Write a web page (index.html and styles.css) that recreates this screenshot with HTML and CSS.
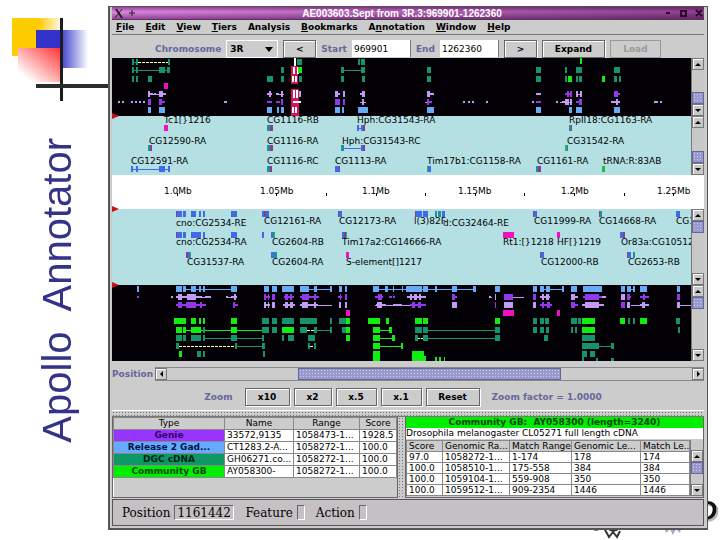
FILE: index.html
```
<!DOCTYPE html>
<html lang="en">

<head>
  <meta charset="UTF-8">
  <meta name="viewport" content="width=device-width, initial-scale=1.0">
  <title>Apollo Annotator</title>
  <link rel="stylesheet" href="styles.css">
</head>

<body>
  <div class="slide">
    <div class="side">
      <svg class="deco" width="108" height="104" aria-hidden="true">
        <defs>
          <linearGradient id="yellow"><stop offset="0.55" stop-color="#ffcc00"/><stop offset="1" stop-color="#fff6dc"/></linearGradient>
          <linearGradient id="blue"><stop offset="0.45" stop-color="#3333cc"/><stop offset="1" stop-color="#fff"/></linearGradient>
          <linearGradient id="red" x1="1" y1="0" x2="0" y2="1"><stop offset="0" stop-color="#ff3333"/><stop offset="0.85" stop-color="#fff"/></linearGradient>
        </defs>
        <rect x="12" y="18" width="48" height="38" fill="url(#yellow)"/>
        <rect x="36" y="30" width="52" height="38" fill="url(#blue)"/>
        <rect x="18" y="48" width="43" height="34" fill="url(#red)"/>
        <rect x="60" y="18" width="3" height="83" fill="#1c1c1c"/>
        <rect x="36" y="84" width="72" height="4" fill="#2c2c2c"/>
      </svg>
      <h1>Apollo  Annotator</h1>
    </div>

    <!-- logo behind the window -->
    <svg class="logo" width="140" height="50" aria-hidden="true">
      <path d="M76 36l3-1 1 4 4-2 2 6 4-4 3 6 3-6 4 4 1-5 4 1-1-4 3-1V24H75v8z" fill="#a6a6c8"/>
      <path d="M11 37q4 5 10 1M24 38l5 9 4-5 4 5 3-6M27 37q6 7 12 1M45 38h6" fill="none" stroke="#333" stroke-width="2"/>
      <text x="117" y="30">D</text>
    </svg>

    <div class="window">
      <div class="titlebar">
        <svg width="30" height="12" aria-hidden="true">
          <path d="M4 2l6 9M10 2L3 11" stroke="#222" stroke-width="1"/>
          <path d="M4 2l6 9" stroke="#222" stroke-width="2"/>
          <path d="M17 6h6M20 3v6" stroke="#222" stroke-width="1"/>
        </svg>
        <span class="caption">AE003603.Sept from 3R.3:969901-1262360</span>
        <svg width="42" height="12" aria-hidden="true">
          <path d="M4 6h4" stroke="#2b062b" stroke-width="2"/>
          <path d="M19 4h5v5h-5zM34 3l6 6M40 3l-6 6" fill="none" stroke="#2b062b" stroke-width="2"/>
        </svg>
      </div>

      <div class="menubar">
        <button><u>F</u>ile</button>
        <button><u>E</u>dit</button>
        <button><u>V</u>iew</button>
        <button><u>T</u>iers</button>
        <button>Analysis</button>
        <button><u>B</u>ookmarks</button>
        <button>A<u>n</u>notation</button>
        <button><u>W</u>indow</button>
        <button><u>H</u>elp</button>
      </div>

      <div class="toolbar">
        <label for="chrom">Chromosome</label>
        <div class="combo">
          <select id="chrom"><option>3R</option></select>
        </div>
        <button class="btn arrow_btn">&lt;</button>
        <label for="start">Start</label>
        <input id="start" class="range" type="text" value="969901">
        <label for="end">End</label>
        <input id="end" class="range" type="text" value="1262360">
        <button class="btn arrow_btn">&gt;</button>
        <button class="btn expand">Expand</button>
        <button class="btn load" disabled>Load</button>
      </div>

      <!-- forward strand evidence -->
      <div class="panel evidence">
        <svg class="track" height="58">
          <path class="line dark" d="M20 4H25M20 12H56M232 12H250"/>
          <path class="dash" d="M26 4H56"/>
          <path class="box dark" d="M20 4H22M24 4H26M56 4H58M246 4H248M249 4H253"/>
          <path class="box dark" d="M20 12H22M24 12H26M47 12H53M55 12H58M169 12H172M229 12H232M249 12H253M315 12H319M424 12H429M453 12H455M464 12H470M502 12H508"/>
          <path class="box dark" d="M20 21H22M24 21H26M36 21H40M155 21H161M169 21H172M187 21H190M229 21H232M250 21H253M315 21H319M424 21H429M453 21H455M464 21H466M467 21H470M502 21H505M507 21H509"/>
          <path class="box bright" d="M468 3H470M456 21H460M490 21H493"/>
          <path class="box pink" d="M52 28H56"/>
          <path class="line lilac" d="M38 36H52M164 36H172M424 36H429M464 36H470M224 44H228M313 44H319M424 44H429M248 44H254M448 44H459M499 44H508M542 44H546M548 44H550"/>
          <path class="box lilac" d="M36 36H38M47 36H51M157 36H159M169 36H171M223 36H226M231 36H233M250 36H253M315 36H318M464 36H466M468 36H470M453 44H457M458 44H460M504 44H506M250 44H252"/>
          <path class="dot lilac" d="M38 36H41M42 36H44M51 36H54M155 36H160M164 36H167M226 36H228M248 36H253M318 36H322M424 36H429M6 44H8M10 44H12M19 44H21M23 44H25M27 44H29M31 44H33M112 44H115M351 44H353M356 44H358M360 44H362M374 44H376M420 44H422M444 44H446M450 44H457M499 44H508M542 44H546M548 44H550"/>
          <path class="box purple" d="M36 44H39M47 44H50M169 44H171M223 44H228M231 44H233M315 44H317M455 36H457M458 36H460M502 36H506M467 44H470"/>
          <path class="dot purple" d="M50 44H53M155 44H160M164 44H168M316 44H320M424 44H429M453 36H460M506 36H508M464 44H470"/>
          <path class="box blue" d="M36 52H39M47 52H53M155 52H160M165 52H167M169 52H172M223 52H228M230 52H232M246 52H249M249 52H256M315 52H322M424 52H429M457 52H460M464 52H470M502 52H508"/>
          <!-- selected gene -->
          <rect x="179" y="8" width="7" height="18" fill="#d4145a"/>
          <rect x="179" y="31" width="8" height="27" fill="#d4145a"/>
          <path d="M183 0V8M182 9V16M186 9V16M181 18V24M184 18V24M182 32V40M185 32V40M181 49V55M184 49V55M181 44H189" stroke="#fff" stroke-width="2"/>
          <path class="box dark" d="M185 4H190"/>
          <path class="box bright" d="M186 12H190"/>
          <path class="box lilac" d="M187 36H189"/>
        </svg>
        <div class="vscroll at_end">
          <button class="up" aria-label="Up"></button>
          <div class="rail"><div class="thumb"></div></div>
          <button class="down" aria-label="Down"></button>
        </div>
      </div>

      <!-- forward strand annotations -->
      <div class="panel genes">
        <svg class="track" height="59">
          <g>
            <text x="52" y="7">Tc1[}1216</text>
            <text x="155" y="7">CG1116-RB</text>
            <text x="245" y="7">Hph:CG31543-RA</text>
            <text x="457" y="7">RpII18:CG1163-RA</text>
            <text x="37" y="28">CG12590-RA</text>
            <text x="155" y="28">CG1116-RA</text>
            <text x="230" y="28">Hph:CG31543-RC</text>
            <text x="455" y="28">CG31542-RA</text>
            <text x="19" y="48">CG12591-RA</text>
            <text x="155" y="48">CG1116-RC</text>
            <text x="223" y="48">CG1113-RA</text>
            <text x="315" y="48">Tim17b1:CG1158-RA</text>
            <text x="425" y="48">CG1161-RA</text>
            <text x="491" y="48">tRNA:R:83AB</text>
          </g>
          <path class="line gene" d="M246 12H250M230 32H250M20 53H57"/>
          <path class="box gene" d="M245 12H247M249 12H251M249 32H251M455 32H456M19 53H21M24 53H26M47 53H53M56 53H58M223 53H227M316 53H319"/>
          <path class="box teal" d="M155 12H158M457 12H459M36 32H38M155 32H158M229 32H232M155 53H158M424 53H426"/>
          <path class="box plum" d="M158 12H161M251 12H253M459 12H460M38 32H40M158 32H161M251 32H253M158 53H160M227 53H228M426 53H429"/>
          <path class="box leaf" d="M453 32H455M315 53H316M490 53H493"/>
          <path class="box pink" d="M52 12H56"/>
        </svg>
        <div class="vscroll at_end">
          <button class="up" aria-label="Up"></button>
          <div class="rail"><div class="thumb"></div></div>
          <button class="down" aria-label="Down"></button>
        </div>
      </div>

      <!-- ruler -->
      <div class="panel ruler">
        <svg class="track" height="34">
          <g>
            <text x="52" y="19">1.0Mb</text>
            <text x="148" y="19">1.05Mb</text>
            <text x="250" y="19">1.1Mb</text>
            <text x="346" y="19">1.15Mb</text>
            <text x="449" y="19">1.2Mb</text>
            <text x="545" y="19">1.25Mb</text>
          </g>
          <path d="M65 18V21M164 18V21M214 18V21M264 18V21M313 18V21M363 18V21M412 18V21M462 18V21M512 18V21M561 18V21" stroke="#000"/>
        </svg>
      </div>

      <!-- reverse strand annotations -->
      <div class="panel genes marked">
        <svg class="track" height="76">
          <g>
            <text x="64" y="17">cno:CG2534-RE</text>
            <text x="152" y="15">CG12161-RA</text>
            <text x="227" y="15">CG12173-RA</text>
            <text x="302" y="15">l(3)82F</text>
            <text x="331" y="17">d:CG32464-RE</text>
            <text x="422" y="15">CG11999-RA</text>
            <text x="487" y="15">CG14668-RA</text>
            <text x="564" y="15">CG10512-RB</text>
            <text x="64" y="36">cno:CG2534-RA</text>
            <text x="160" y="36">CG2604-RB</text>
            <text x="230" y="36">Tim17a2:CG14666-RA</text>
            <text x="391" y="36">Rt1:[}1218</text>
            <text x="445" y="36">HF[}1219</text>
            <text x="509" y="36">Or83a:CG10512-RA</text>
            <text x="75" y="56">CG31537-RA</text>
            <text x="160" y="56">CG2604-RA</text>
            <text x="234" y="56">S-element[]1217</text>
            <text x="429" y="56">CG12000-RB</text>
            <text x="516" y="56">CG2653-RB</text>
          </g>
          <path class="box gene" d="M65 5H70M71 5H74M79 5H84M87 5H89M91 5H93M119 5H125M150 5H152M154 5H157M227 5H230M304 5H310M311 5H316M330 5H333M422 5H425M564 5H568"/>
          <path class="box gene" d="M65 26H70M71 26H74M79 26H89M91 26H93M119 26H125M150 26H152M159 26H161M230 26H232M508 26H511M76 46H78M159 46H162M429 46H432M516 46H519"/>
          <path class="box teal" d="M323 5H325M326 5H329M488 5H490M161 26H163M162 46H165M521 46H523"/>
          <path class="box plum" d="M64 5H65M152 5H154M226 5H227M303 5H304M421 5H422M487 5H488M64 26H65M232 26H234M511 26H513M74 46H76M428 46H429M515 46H516"/>
          <path class="box leaf" d="M234 26H235M162 26H163M78 46H79"/>
          <path class="box pink" d="M391 26H402M445 26H448M234 46H237"/>
        </svg>
        <div class="vscroll">
          <button class="up" aria-label="Up"></button>
          <div class="rail"><div class="thumb"></div></div>
          <button class="down" aria-label="Down"></button>
        </div>
      </div>

      <!-- reverse strand evidence -->
      <div class="panel evidence marked">
        <svg class="track" height="76">
          <path class="line blue" d="M74 4H119M197 4H218M267 4H361M430 4H450M515 4H522"/>
          <path class="box blue" d="M25 4H27M64 4H70M71 4H74M79 4H84M87 4H89M91 4H93M119 4H125M152 4H157M160 4H165M170 4H182M188 4H197M202 4H205M218 4H220M227 4H230M233 4H235M261 4H267M273 4H276M281 4H282M290 4H291M294 4H310M311 4H316M323 4H325M340 4H345M361 4H364M383 4H388M421 4H425M428 4H432M434 4H438M450 4H452M459 4H465M471 4H490M509 4H513M515 4H519M521 4H523M528 4H535M565 4H568"/>
          <path class="line lilac" d="M64 12H99M114 12H125M295 12H314M205 20H220M263 20H312M519 20H536M568 20H580M378 12H380M398 12H412"/>
          <path class="box lilac" d="M66 12H70M75 12H84M122 12H124M298 12H300M302 12H305M307 12H309M383 12H384M430 12H432M434 12H437M459 12H463M509 12H513M152 20H154M156 20H157M160 20H163M173 20H176M178 20H181M190 20H196M202 20H204M227 20H229M233 20H235M265 20H270M340 20H345M392 20H401M421 20H424M473 20H487M515 20H518M530 20H533M565 20H568"/>
          <path class="dot lilac" d="M59 12H61M64 12H90M93 12H99M114 12H116M119 12H125M295 12H314M377 12H379M428 12H438M459 12H466M486 12H494M152 20H158M171 20H183M188 20H206M264 20H274M281 20H290M470 20H492M528 20H537"/>
          <path class="box purple" d="M152 12H154M156 12H157M160 12H163M173 12H176M178 12H180M190 12H197M202 12H204M228 12H229M233 12H235M266 12H270M340 12H343M392 12H401M421 12H424M473 12H487M515 12H518M531 12H533M565 12H568M66 20H70M74 20H84M88 20H90M121 20H123M300 20H303M306 20H309M383 20H384M430 20H432M435 20H438M459 20H463M509 20H513"/>
          <path class="dot purple" d="M25 12H27M152 12H158M172 12H182M188 12H207M226 12H230M263 12H271M277 12H280M281 12H283M340 12H345M471 12H490M515 12H519M528 12H537M64 20H94M121 20H126M298 20H314M428 20H440M459 20H466"/>
          <path class="box pink" d="M234 28H238M391 28H402M445 28H448"/>
          <path class="line bright" d="M74 45H152M268 45H278M268 53H281M268 61H290"/>
          <path class="line dark" d="M205 45H218M316 45H383M93 53H151M316 53H383M125 61H151M487 61H500"/>
          <path class="dash" d="M195 45H203M67 61H124M176 53H180M305 53H311M198 61H203"/>
          <path class="box bright" d="M62 36H74M79 36H84M87 36H89M91 36H93M119 36H125M234 36H238M256 36H268M274 36H277M303 36H310M311 36H316M383 36H388M470 36H483M508 36H513M528 36H535"/>
          <path class="box dark" d="M150 36H157M160 36H165M170 36H182M188 36H205M218 36H220M227 36H234M421 36H425M428 36H432M433 36H437M459 36H465M466 36H469M516 36H518M521 36H523M564 36H568"/>
          <path class="box bright" d="M64 45H70M71 45H74M79 45H89M119 45H125M170 45H182M234 45H238M261 45H268M277 45H280M470 45H483"/>
          <path class="box dark" d="M91 45H93M150 45H157M160 45H165M188 45H195M202 45H205M218 45H220M230 45H234M303 45H310M311 45H316M383 45H388M421 45H425M428 45H432M434 45H437M459 45H461M463 45H465M566 45H568"/>
          <path class="box dark" d="M64 53H70M71 53H74M79 53H89M91 53H93M119 53H125M150 53H152M170 53H172M176 53H182M196 53H203M303 53H306M311 53H316M383 53H388M432 53H436M470 53H483"/>
          <path class="box bright" d="M234 53H238M261 53H268M280 53H283M261 61H268M289 61H291M67 69H70M261 69H268M261 74H268M300 69H312M300 74H314M323 75H325M327 75H329M332 75H333"/>
          <path class="box dark" d="M64 61H67M123 61H125M150 61H153M196 61H198M202 61H204M470 61H487M499 61H502M85 69H89M91 69H93M151 69H153M470 69H475M478 69H483M470 75H472M484 76H486M499 76H502"/>
        </svg>
        <div class="vscroll">
          <button class="up" aria-label="Up"></button>
          <div class="rail"><div class="thumb"></div></div>
          <button class="down" aria-label="Down"></button>
        </div>
      </div>

      <div class="position">
        <span>Position</span>
        <div class="hscroll">
          <button class="left" aria-label="Left"></button>
          <div class="rail"><div class="thumb"></div></div>
          <button class="right" aria-label="Right"></button>
        </div>
      </div>

      <div class="zoombar">
        <span class="zoom_label">Zoom</span>
        <button class="btn x10">x10</button>
        <button class="btn x2">x2</button>
        <button class="btn x5">x.5</button>
        <button class="btn x5">x.1</button>
        <button class="btn reset">Reset</button>
        <span class="factor">Zoom factor = 1.0000</span>
      </div>

      <div class="divider"></div>

      <div class="details">
        <div class="left_pane">
          <table class="types">
            <colgroup><col class="c_type"><col class="c_name"><col class="c_range"><col></colgroup>
            <thead>
              <tr><th>Type</th><th>Name</th><th>Range</th><th>Score</th></tr>
            </thead>
            <tbody>
              <tr><td class="genie">Genie</td><td>33572,9135</td><td>1058473-1...</td><td>1928.5</td></tr>
              <tr><td class="gad">Release 2 Gad...</td><td>CT1283.2-A...</td><td>1058272-1...</td><td>100.0</td></tr>
              <tr><td class="dgc">DGC cDNA</td><td>GH06271.co...</td><td>1058272-1...</td><td>100.0</td></tr>
              <tr><td class="gb">Community GB</td><td>AY058300-</td><td>1058272-1...</td><td>100.0</td></tr>
            </tbody>
          </table>
        </div>
        <div class="vdivider"></div>
        <div class="right_pane">
          <div class="hit_title">Community GB:&nbsp; AY058300 (length=3240)</div>
          <div class="hit_desc">Drosophila melanogaster CL05271 full length cDNA</div>
          <div class="hits_wrap">
            <table class="hits">
              <colgroup><col class="h_score"><col class="h_genomic"><col class="h_match"><col class="h_glen"><col></colgroup>
              <thead>
                <tr><th>Score</th><th>Genomic Ra...</th><th>Match Range</th><th>Genomic Le...</th><th>Match Le...</th></tr>
              </thead>
              <tbody>
                <tr><td>97.0</td><td>1058272-1...</td><td>1-174</td><td>178</td><td>174</td></tr>
                <tr><td>100.0</td><td>1058510-1...</td><td>175-558</td><td>384</td><td>384</td></tr>
                <tr><td>100.0</td><td>1059104-1...</td><td>559-908</td><td>350</td><td>350</td></tr>
                <tr><td>100.0</td><td>1059512-1...</td><td>909-2354</td><td>1446</td><td>1446</td></tr>
              </tbody>
            </table>
            <div class="vscroll">
              <button class="up" aria-label="Up"></button>
              <div class="rail"><div class="thumb"></div></div>
              <button class="down" aria-label="Down"></button>
            </div>
          </div>
        </div>
      </div>

      <div class="status">
        <label for="pos">Position</label>
        <input id="pos" class="pos" type="text" value="1161442">
        <label for="feature">Feature</label>
        <input id="feature" type="text">
        <label for="action">Action</label>
        <input id="action" type="text">
      </div>
    </div>
  </div>
</body>

</html>
```
FILE: styles.css
```
* {
  margin: 0;
  padding: 0;
  box-sizing: border-box;
}

body {
  background: white;
  font-family: 'DejaVu Sans', sans-serif;
  font-size: 9px;
  color: black;
}

button,
input,
select {
  font: inherit;
  color: inherit;
  border: 0;
  border-radius: 0;
  background: none;
}

.slide {
  position: relative;
  display: flex;
  align-items: flex-start;
  min-height: 100vh;
  padding-right: 12px;
  overflow: hidden;
}

/* left side of the slide */
.side {
  display: flex;
  flex-direction: column;
  align-items: center;
  gap: 34px;
  width: 108px;
  flex-shrink: 0;
}

.deco {
  display: block;
}

h1 {
  writing-mode: vertical-rl;
  transform: rotate(180deg);
  white-space: pre;
  margin-left: 6px;
  font-family: 'Liberation Sans', sans-serif;
  font-weight: normal;
  font-size: 40px;
  line-height: 44px;
  color: #333388;
}

.logo {
  position: absolute;
  right: 0;
  bottom: 0;
}

.logo text {
  font-family: 'Liberation Sans', sans-serif;
  font-weight: bold;
  font-style: italic;
  font-size: 28px;
  fill: #111;
  filter: drop-shadow(2px 2px 0 #b8b8b8);
}

/* window frame */
.window {
  position: relative;
  flex: 1;
  min-width: 0;
  margin-top: 6px;
  background: #cccccc;
  border: 1px solid #555;
  border-width: 1px 1px 2px 2px;
  padding: 0 3px 2px 2px;
}

.titlebar {
  display: flex;
  align-items: center;
  justify-content: space-between;
  height: 13px;
  background: linear-gradient(to right, rgba(60, 0, 60, 0), rgba(60, 0, 60, 0.5)), linear-gradient(#a03ca4, #d48cd8 40%, #a03ca4);
  border-bottom: 1px solid #444;
}

.caption {
  font-family: 'Liberation Sans', sans-serif;
  font-size: 10px;
  font-weight: bold;
  color: white;
}

.menubar {
  display: flex;
  align-items: center;
  gap: 11px;
  height: 15px;
  padding: 0 4px;
  border-bottom: 1px solid #777;
}

.menubar button {
  font-weight: bold;
}

.toolbar {
  display: flex;
  align-items: center;
  justify-content: center;
  gap: 5px;
  height: 23px;
  padding-top: 4px;
}

.toolbar label,
.position span,
.zoombar span {
  font-weight: bold;
  color: #666699;
}

.btn {
  height: 18px;
  font-weight: bold;
  border: 1px solid #666;
  box-shadow: inset 1px 1px 0 white, 1px 1px 0 white;
}

.btn:disabled {
  color: #999;
  font-weight: bold;
  border-color: #999;
  box-shadow: none;
}

.combo {
  position: relative;
  width: 52px;
  height: 18px;
  border: 1px solid white;
}

.combo::after {
  content: '';
  position: absolute;
  right: 4px;
  top: 6px;
  border: 4px solid transparent;
  border-top: 5px solid black;
  border-bottom: 0;
  pointer-events: none;
}

.combo select {
  appearance: none;
  width: 100%;
  height: 16px;
  padding-left: 3px;
  font-weight: bold;
}

.arrow_btn {
  width: 33px;
}

.expand {
  width: 63px;
}

.load {
  width: 51px;
}

.range {
  width: 59px;
  height: 17px;
  padding: 0 2px;
  background: white;
  border-right: 1px solid #777;
}

/* genome panels */
.panel {
  position: relative;
  display: flex;
}

.track {
  display: block;
  flex: 1;
  min-width: 0;
  font-size: 9px;
  shape-rendering: crispEdges;
}

.evidence .track {
  background: #030006;
}

.genes .track {
  background: #b4e0e4;
}

.ruler .track {
  background: white;
}

.marked::before,
.genes::before {
  content: '';
  position: absolute;
  left: 0;
  top: -3px;
  border: 3px solid transparent;
  border-left: 7px solid #cc1111;
  border-right: 0;
}

.box {
  stroke-width: 6px;
}

.dot {
  stroke-width: 2px;
}

.line {
  stroke-width: 1px;
}

.dash {
  stroke: #ffffaa;
  stroke-width: 1px;
  stroke-dasharray: 3 1;
}

.blue {
  stroke: #66aaf8;
}

.gene {
  stroke: #3f6be6;
}

.dark {
  stroke: #149468;
}

.bright {
  stroke: #10ee10;
}

.lilac {
  stroke: #c39af4;
}

.purple {
  stroke: #9038ea;
}

.pink {
  stroke: #f010c0;
}

.teal {
  stroke: #1d9494;
}

.plum {
  stroke: #8a3c90;
}

.leaf {
  stroke: #20bc40;
}

/* scrollbars */
.vscroll {
  display: flex;
  flex-direction: column;
  width: 13px;
  flex-shrink: 0;
  background: #c8c8c8;
  border-left: 1px solid #777;
}

.vscroll button,
.hscroll button {
  display: flex;
  align-items: center;
  justify-content: center;
  width: 12px;
  height: 12px;
  flex-shrink: 0;
  border: 1px solid #777;
  box-shadow: inset 1px 1px 0 white;
}

.vscroll button::before,
.hscroll button::before {
  content: '';
  border: 3px solid transparent;
}

.vscroll .up::before {
  border-top: 0;
  border-bottom-color: black;
}

.vscroll .down::before {
  border-bottom: 0;
  border-top-color: black;
}

.hscroll .left::before {
  border-left: 0;
  border-right-color: black;
}

.hscroll .right::before {
  border-right: 0;
  border-left-color: black;
}

.rail {
  display: flex;
  flex-direction: column;
  flex: 1;
}

.at_end .rail {
  justify-content: flex-end;
}

.thumb {
  height: 12px;
  border: 1px solid #666699;
  background: radial-gradient(#ccccff 1px, transparent 1px) 0 0 / 3px 3px #9999cc;
}

.position {
  display: flex;
  align-items: center;
  gap: 2px;
  padding-top: 6px;
}

.hscroll {
  display: flex;
  flex: 1;
  border: 1px solid #888;
  border-width: 1px 0;
}

.hscroll .thumb {
  width: 50%;
  margin-left: 25%;
}

.zoombar {
  display: flex;
  align-items: center;
  justify-content: center;
  gap: 4px;
  padding: 7px 10px 4px 0;
}

.zoombar .zoom_label {
  margin-right: 8px;
}

.zoombar .factor {
  margin-left: 8px;
}

.x10 {
  width: 45px;
}

.x2 {
  width: 38px;
}

.x5 {
  width: 41px;
}

.reset {
  width: 54px;
}

/* tables at the bottom */
.divider {
  height: 7px;
  border-top: 1px solid white;
  border-bottom: 1px solid #777;
  background: radial-gradient(#777 1px, transparent 1px) 0 0 / 3px 3px;
}

.details {
  display: flex;
  height: 81px;
}

.left_pane {
  width: 286px;
  border: 1px solid #666;
  border-top: 0;
  box-shadow: inset 1px 0 0 white;
}

.vdivider {
  width: 7px;
  background: radial-gradient(#777 1px, transparent 1px) 0 0 / 3px 3px;
}

.right_pane {
  flex: 1;
  min-width: 0;
  border: 1px solid #666;
  border-top: 0;
}

table {
  width: 100%;
  table-layout: fixed;
  border-collapse: collapse;
}

th,
td {
  height: 12px;
  padding: 0 2px;
  line-height: 11px;
  text-align: left;
  white-space: nowrap;
  overflow: hidden;
  border: 1px solid #888;
  font-weight: normal;
}

th {
  background: #cccccc;
}

td {
  background: white;
}

.types th {
  text-align: center;
}

.types td:first-child {
  text-align: center;
  font-weight: bold;
}

.c_type {
  width: 111px;
}

.c_name {
  width: 69px;
}

.c_range {
  width: 66px;
}

.types .genie {
  background: #9933ff;
  color: #330066;
}

.types .gad {
  background: #66aaff;
  color: #001144;
}

.types .dgc {
  background: #0c9966;
  color: #002211;
}

.types .gb {
  background: #00ee00;
  color: #004400;
}

.hit_title {
  height: 11px;
  line-height: 11px;
  text-align: center;
  font-weight: bold;
  background: #00ee00;
  color: #004400;
}

.hit_desc {
  height: 11px;
  line-height: 11px;
  white-space: nowrap;
  overflow: hidden;
  background: white;
}

.hits_wrap {
  display: flex;
  margin-top: 1px;
}

.hits {
  flex: 1;
  min-width: 0;
}

.hits th,
.hits td {
  height: 11px;
  line-height: 10px;
}

.hits_wrap .vscroll {
  padding-top: 10px;
}

.h_score {
  width: 36px;
}

.h_genomic {
  width: 67px;
}

.h_match {
  width: 62px;
}

.h_glen {
  width: 69px;
}

/* status line */
.status {
  display: flex;
  align-items: center;
  height: 27px;
  margin-top: 1px;
  padding-left: 9px;
  border: 1px solid #555;
  background: #c4c0c4;
  font-family: 'DejaVu Serif', serif;
  font-size: 12px;
}

.status input {
  width: 8px;
  height: 15px;
  margin: 0 11px 0 4px;
  border: 1px solid;
  border-color: #666 white white #666;
}

.status .pos {
  width: 60px;
  padding-left: 2px;
}
```
